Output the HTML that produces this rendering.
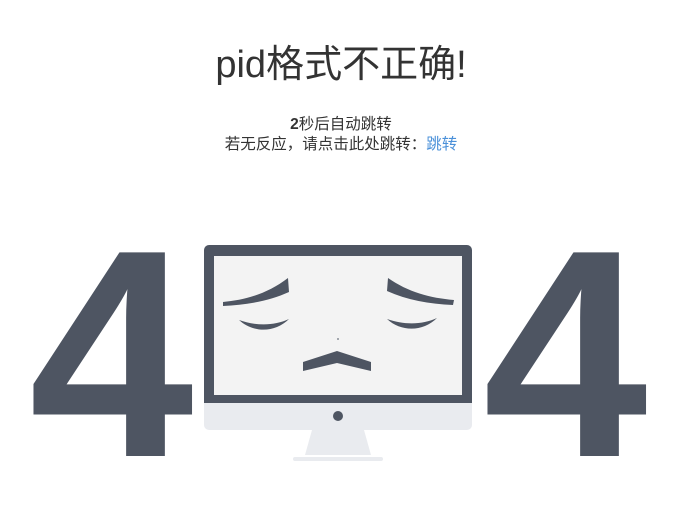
<!DOCTYPE html>
<html><head><meta charset="utf-8"><style>
body{margin:0;width:682px;height:501px;background:#fff;position:relative;overflow:hidden;font-family:"Liberation Sans","Noto Sans CJK SC",sans-serif;color:#333}
h1{position:absolute;top:40px;left:0;width:682px;text-align:center;margin:0;font-weight:normal;font-size:38px;line-height:50px;color:#333}
.t{position:absolute;left:0;width:682px;text-align:center;font-size:15.5px;line-height:20px}
a{color:#4a90d9;text-decoration:none}
.four{position:absolute;top:206px;font-size:296px;line-height:1;font-weight:bold;color:#4e5562;font-family:"Liberation Sans",sans-serif}
</style></head><body>
<h1>pid格式不正确!</h1>
<div class="t" style="top:115px"><b>2</b>秒后自动跳转</div>
<div class="t" style="top:135px">若无反应，请点击此处跳转：<a>跳转</a></div>
<div class="four" style="left:29px">4</div>
<div class="four" style="left:483px">4</div>
<svg style="position:absolute;left:0;top:0" width="682" height="501">
<rect x="204" y="245" width="268" height="185" rx="5" fill="#e9ebef"/>
<path d="M209 245h258a5 5 0 0 1 5 5v153h-268v-153a5 5 0 0 1 5-5z" fill="#4e5562"/>
<rect x="214" y="256" width="248" height="139" fill="#f3f3f3"/>
<circle cx="338" cy="416" r="5" fill="#4e5562"/>
<path d="M312 430h52l7 25h-66z" fill="#e9ebef"/>
<rect x="293" y="457" width="90" height="4" rx="2" fill="#e9ebef"/>
<g fill="#4e5562">
<path d="M223 302c22-2 44-8 65-24l1 14c-20 9-42 13-66 14z"/>
<path d="M239 320c17 6 35 6 50-1c-14 14-36 14-50 1z"/>
<path d="M388 278c20 14 42 20 66 22l-1 5c-24-1-46-5-66-14z"/>
<path d="M387 319c17 6 35 6 50-1c-14 14-36 14-50 1z"/>
<path d="M303 362l34-11l34 11v9l-34-8l-34 8z"/>
<circle cx="338" cy="339" r="1" fill="#8a8f99"/>
</g>
</svg>
</body></html>
